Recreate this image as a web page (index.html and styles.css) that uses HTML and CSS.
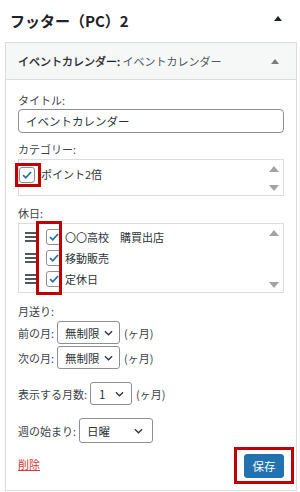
FILE: index.html
```html
<!DOCTYPE html>
<html lang="ja">
<head>
    <meta charset="UTF-8">
    <meta name="viewport" content="width=device-width, initial-scale=1.0">
    <title>フッター（PC）2</title>
    <link rel="stylesheet" href="styles.css">
</head>
<body>
    <div class="sidebar-head">
        <h2>フッター（PC）2</h2>
        <span class="toggle dark"></span>
    </div>

    <div class="widget">
        <div class="widget-top">
            <h3><b>イベントカレンダー:</b> <span>イベントカレンダー</span></h3>
            <span class="toggle"></span>
        </div>

        <div class="widget-inside">
            <label class="field-label">タイトル:</label>
            <div class="text-input">イベントカレンダー</div>

            <label class="field-label">カテゴリー:</label>
            <div class="checklist cat-list">
                <div class="items">
                    <div class="item">
                        <span class="mark">
                            <span class="check"><svg viewBox="0 0 16 16" width="14" height="14"><path d="M3.5 8.2 L6.6 11.2 L12.6 4.6" fill="none" stroke="#2271b1" stroke-width="2"/></svg></span>
                        </span>
                        <span class="item-text">ポイント2倍</span>
                    </div>
                </div>
                <div class="scroller">
                    <span class="arr up"></span>
                    <span class="arr down"></span>
                </div>
            </div>

            <label class="field-label">休日:</label>
            <div class="checklist holiday-list">
                <div class="items">
                    <div class="item">
                        <span class="handle"></span>
                        <span class="check"><svg viewBox="0 0 16 16" width="14" height="14"><path d="M3.5 8.2 L6.6 11.2 L12.6 4.6" fill="none" stroke="#2271b1" stroke-width="2"/></svg></span>
                        <span class="item-text">〇〇高校　購買出店</span>
                    </div>
                    <div class="item">
                        <span class="handle"></span>
                        <span class="check"><svg viewBox="0 0 16 16" width="14" height="14"><path d="M3.5 8.2 L6.6 11.2 L12.6 4.6" fill="none" stroke="#2271b1" stroke-width="2"/></svg></span>
                        <span class="item-text">移動販売</span>
                    </div>
                    <div class="item">
                        <span class="handle"></span>
                        <span class="check"><svg viewBox="0 0 16 16" width="14" height="14"><path d="M3.5 8.2 L6.6 11.2 L12.6 4.6" fill="none" stroke="#2271b1" stroke-width="2"/></svg></span>
                        <span class="item-text">定休日</span>
                    </div>
                    <span class="mark-col"></span>
                </div>
                <div class="scroller">
                    <span class="arr up"></span>
                    <span class="arr down"></span>
                </div>
            </div>

            <label class="field-label month-label">月送り:</label>
            <div class="row">
                <span>前の月:</span>
                <div class="select w-mid">無制限 <svg viewBox="0 0 10 6" width="9" height="6"><path d="M1 1 L5 5 L9 1" fill="none" stroke="#2c3338" stroke-width="1.4"/></svg></div>
                <span>(ヶ月)</span>
            </div>
            <div class="row tight">
                <span>次の月:</span>
                <div class="select w-mid">無制限 <svg viewBox="0 0 10 6" width="9" height="6"><path d="M1 1 L5 5 L9 1" fill="none" stroke="#2c3338" stroke-width="1.4"/></svg></div>
                <span>(ヶ月)</span>
            </div>

            <div class="row spaced">
                <span>表示する月数:</span>
                <div class="select w-small">1 <svg viewBox="0 0 10 6" width="9" height="6"><path d="M1 1 L5 5 L9 1" fill="none" stroke="#2c3338" stroke-width="1.4"/></svg></div>
                <span>(ヶ月)</span>
            </div>

            <div class="row spaced">
                <span>週の始まり:</span>
                <div class="select w-wide">日曜 <svg viewBox="0 0 10 6" width="9" height="6"><path d="M1 1 L5 5 L9 1" fill="none" stroke="#2c3338" stroke-width="1.4"/></svg></div>
            </div>

            <div class="actions">
                <a href="#" class="delete">削除</a>
                <span class="save-mark"><button class="save">保存</button></span>
            </div>
        </div>
    </div>
</body>
</html>
```

FILE: styles.css
```css
body {
    margin: 0;
    font-family: "Noto Sans CJK JP", "Noto Sans", sans-serif;
    font-size: 11px;
    color: #3c434a;
    background: #fff;
}
.sidebar-head {
    display: flex;
    justify-content: space-between;
    align-items: center;
    height: 42px;
    padding: 0 18px 0 10px;
    box-sizing: border-box;
}
.sidebar-head h2 {
    margin: 0;
    font-size: 15px;
    font-weight: bold;
    color: #1d2327;
    margin-top: -2px;
}
.toggle {
    width: 0;
    height: 0;
    border-left: 4px solid transparent;
    border-right: 4px solid transparent;
    border-bottom: 5px solid #787c82;
}
.toggle.dark {
    border-bottom-color: #1d2327;
    margin-top: -6px;
}
.widget {
    margin-left: 5px;
    width: 292px;
    box-sizing: border-box;
    border: 1px solid #dcdcde;
}
.widget-top {
    display: flex;
    justify-content: space-between;
    align-items: center;
    height: 36px;
    padding: 0 17px 0 12px;
    background: #f6f7f7;
    border-bottom: 1px solid #dcdcde;
}
.widget-top h3 {
    margin: 0;
    font-size: 11px;
    font-weight: normal;
    color: #50575e;
}
.widget-top h3 b {
    font-weight: normal;
    color: #1d2327;
    -webkit-text-stroke: 0.3px #1d2327;
}
.widget-inside {
    padding: 12px 12px 6px 12px;
}
.field-label {
    display: block;
    height: 17px;
    line-height: 17px;
}
.text-input {
    height: 24px;
    box-sizing: border-box;
    border: 1px solid #8c8f94;
    border-radius: 4px;
    padding: 0 7px;
    line-height: 22px;
    font-size: 11.5px;
    color: #2c3338;
    margin-bottom: 8px;
}
.checklist {
    display: flex;
    border: 1px solid #dcdcde;
    margin-top: 1px;
    margin-bottom: 9px;
}
.cat-list {
    height: 37px;
    box-sizing: border-box;
}
.holiday-list {
    height: 70px;
    box-sizing: border-box;
}
.items {
    flex: 1;
    position: relative;
    padding: 3px 0 0 4px;
}
.holiday-list .items {
    padding: 2px 0 0 6px;
}
.item {
    display: flex;
    align-items: center;
    height: 21px;
}
.check {
    display: flex;
    align-items: center;
    justify-content: center;
    width: 14px;
    height: 14px;
    border: 1px solid #8c8f94;
    border-radius: 3px;
    background: #fff;
    margin-right: 3px;
}
.mark {
    display: flex;
    align-items: center;
    justify-content: center;
    width: 20px;
    height: 18px;
    border: 3px solid #c00000;
    margin-left: -8px;
    margin-top: 2px;
    position: relative;
}
.handle {
    width: 12px;
    height: 2px;
    background: #50575e;
    box-shadow: 0 -4px 0 #50575e, 0 4px 0 #50575e;
    margin-right: 9px;
}
.item-text {
    color: #2c3338;
}
.mark-col {
    position: absolute;
    left: 17px;
    top: -3px;
    width: 20px;
    height: 68px;
    border: 3px solid #c00000;
}
.scroller {
    width: 14px;
    display: flex;
    flex-direction: column;
    justify-content: space-between;
    align-items: center;
    padding: 6px 2px 4px 0;
}
.arr {
    width: 0;
    height: 0;
    border-left: 5px solid transparent;
    border-right: 5px solid transparent;
}
.arr.up {
    border-bottom: 6px solid #a3a3a3;
}
.arr.down {
    border-top: 6px solid #a3a3a3;
}
.month-label {
    margin-top: 10px;
    height: 18px;
}
.row {
    display: flex;
    align-items: center;
    gap: 3px;
}
.row.tight {
    margin-top: 2px;
}
.row.spaced {
    margin-top: 13px;
}
.select {
    display: flex;
    align-items: center;
    justify-content: space-between;
    height: 23px;
    box-sizing: border-box;
    border: 1px solid #8c8f94;
    border-radius: 3px;
    padding: 0 7px 0 7px;
    font-size: 11.5px;
    color: #2c3338;
    margin-right: 1px;
}
.w-mid {
    width: 63px;
    padding-right: 6px;
}
.w-small {
    width: 42px;
    padding-left: 8px;
}
.w-wide {
    width: 74px;
    height: 25px;
    padding-right: 9px;
}
.actions {
    display: flex;
    justify-content: space-between;
    align-items: center;
    margin-top: 4px;
}
.delete {
    color: #d63638;
    text-decoration: underline;
    margin-top: -4px;
}
.save-mark {
    display: block;
    border: 3px solid #c00000;
    padding: 4px 7px 3px 7px;
    margin-right: -10px;
}
.save {
    display: block;
    width: 40px;
    height: 24px;
    border: 1px solid #2271b1;
    border-radius: 3px;
    background: #2271b1;
    color: #fff;
    font-family: inherit;
    font-size: 11.5px;
    padding: 0;
}
```
